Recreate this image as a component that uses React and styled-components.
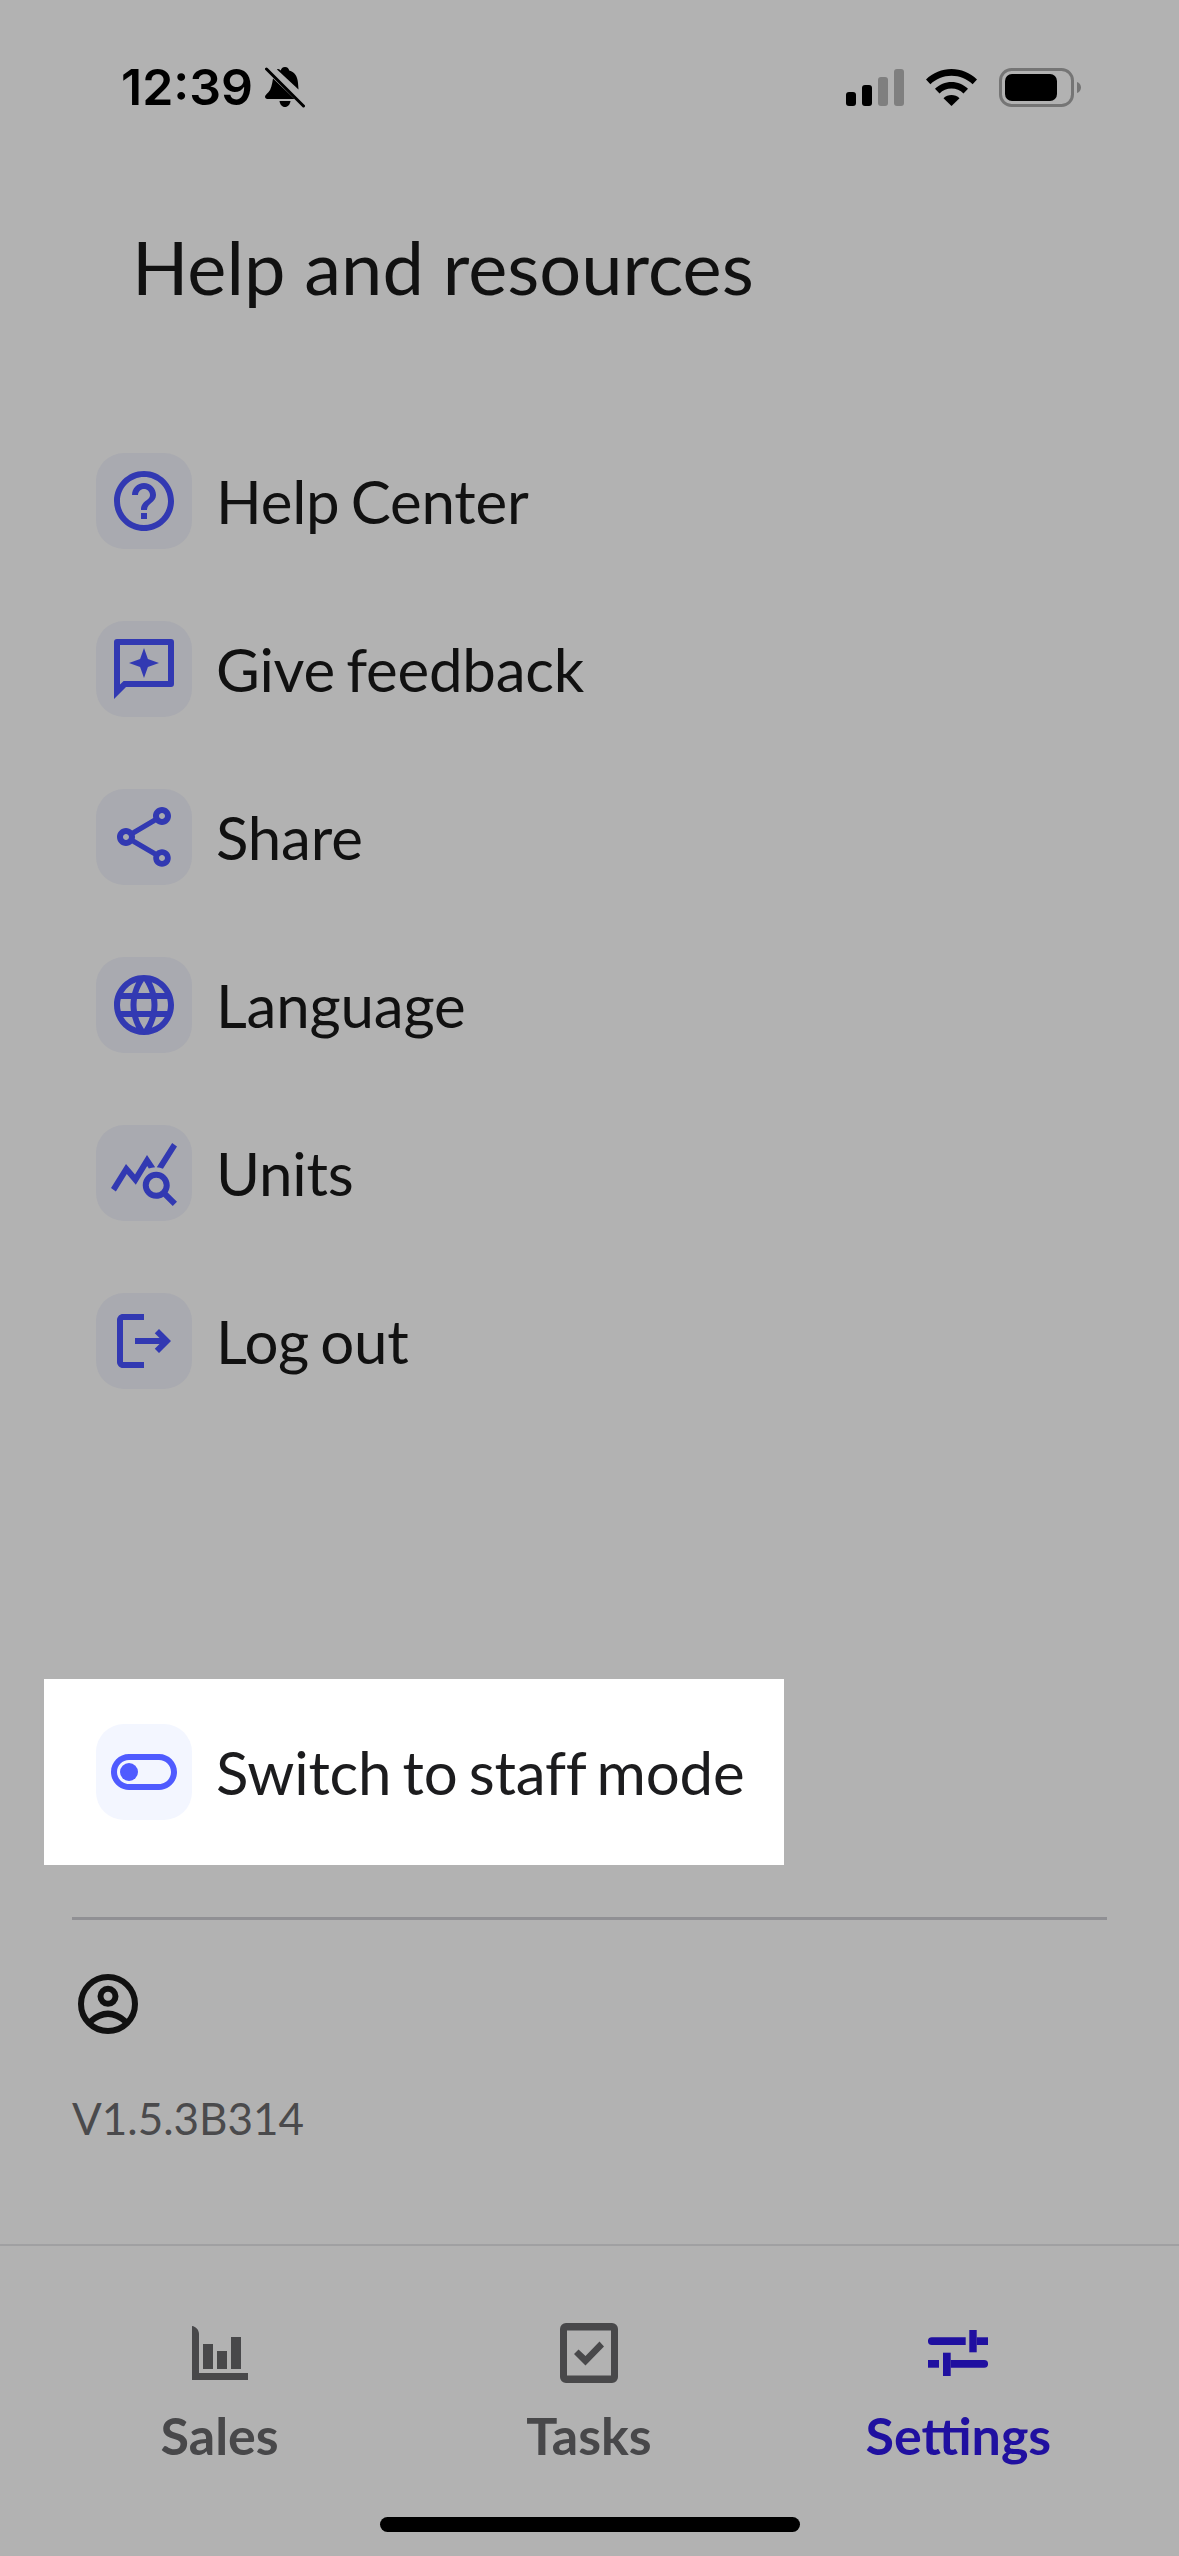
import React from "react";
import styled, { createGlobalStyle } from "styled-components";
import { MdHelpOutline, MdOutlineShare, MdLanguage, MdQueryStats } from "react-icons/md";

const GlobalStyle = createGlobalStyle`
  html, body { margin: 0; padding: 0; background: #b2b2b2; }
`;

const Page = styled.div`
  position: relative;
  width: 1179px;
  height: 2556px;
  display: flex;
  flex-direction: column;
  background: #b2b2b2;
  font-family: Lato, "Liberation Sans", sans-serif;
  overflow: hidden;
`;
const StatusBar = styled.div`
  height: 68px;
  padding: 68px 98px 0 121px;
  display: flex;
  align-items: flex-start;
  justify-content: space-between;
`;
const StatusLeft = styled.div`
  display: flex;
  align-items: center;
  gap: 12px;
  height: 38px;
`;
const Time = styled.span`
  font-family: Inter, sans-serif;
  font-size: 50px;
  font-weight: 600;
  line-height: 38px;
  color: #000;
`;
const StatusRight = styled.div`
  display: flex;
  align-items: center;
  gap: 22px;
`;
const Title = styled.h1`
  margin: 88px 0 0 132px;
  font-size: 74px;
  font-weight: 400;
  line-height: 86px;
  color: #111;
`;
const Menu = styled.div`
  margin-top: 143px;
  padding-left: 96px;
  display: flex;
  flex-direction: column;
  gap: 72px;
`;
const Row = styled.div`
  display: flex;
  align-items: center;
  gap: 24px;
  height: 96px;
`;
const Tile = styled.div`
  width: 96px;
  height: 96px;
  border-radius: 28px;
  display: flex;
  align-items: center;
  justify-content: center;
  background: ${(p) => (p.$light ? "#f3f6ff" : "#a9aab0")};
  color: ${(p) => (p.$light ? "#4f5bff" : "#3239b2")};
`;
const RowLabel = styled.span`
  font-size: 60px;
  line-height: 72px;
  letter-spacing: -0.2px;
  word-spacing: -4px;
  color: ${(p) => (p.$light ? "#1c1c1e" : "#111")};
  white-space: nowrap;
`;
const SwitchCard = styled.div`
  margin: 290px 0 0 44px;
  width: 740px;
  height: 186px;
  padding: 0 0 0 52px;
  box-sizing: border-box;
  background: #fff;
  display: flex;
  align-items: center;
`;
const Divider = styled.div`
  margin: 52px 72px 0;
  height: 3px;
  background: #909094;
`;
const AccountWrap = styled.div`
  margin: 48px 0 0 72px;
  height: 72px;
  color: #111;
`;
const Version = styled.div`
  margin: 50px 0 0 72px;
  font-size: 44px;
  line-height: 56px;
  color: #4a4a4c;
`;
const TabBar = styled.div`
  margin-top: auto;
  height: 312px;
  box-sizing: border-box;
  border-top: 2px solid #a0a0a2;
  padding: 0 36px 0 35px;
  display: grid;
  grid-template-columns: repeat(3, 1fr);
`;
const Tab = styled.div`
  display: flex;
  flex-direction: column;
  align-items: center;
  color: ${(p) => (p.$active ? "#2010a0" : "#48484a")};
`;
const TabIcon = styled.div`
  height: 60px;
  margin-top: 77px;
  display: flex;
  align-items: center;
  justify-content: center;
`;
const TabLabel = styled.span`
  margin-top: 22px;
  font-size: 52px;
  font-weight: 700;
  line-height: 60px;
`;
const HomeIndicator = styled.div`
  position: absolute;
  left: 380px;
  bottom: 24px;
  width: 420px;
  height: 15px;
  border-radius: 8px;
  background: #000;
`;

const BellOff = () => (
  <svg width="40" height="42" viewBox="0 0 40 42">
    <path d="M20 1c2.400 0 4 1.600 4.200 3.600C30 6.200 32.600 11 33 17l.5 6.500L12 3.500C13.600 2 15.600 4.600 15.800 4.600 16 2.600 17.600 1 20 1zM8 12.500L29.500 33H2.500c-1.600 0-2.500-1-2.500-2.200 0-1.600 1.600-2.800 3.400-4.600C6 23.600 7 19 8 12.500zM14.500 35h11c-.4 3.400-2.600 6-5.500 6s-5.100-2.600-5.500-6z" fill="#000" />
    <path d="M1.500 3L38.500 40" stroke="#000" strokeWidth="3" strokeLinecap="round" />
  </svg>
);

const Signal = () => (
  <svg width="58" height="37" viewBox="0 0 58 37">
    <rect x="0" y="23" width="10" height="14" rx="3" fill="#000" />
    <rect x="16" y="16" width="10" height="21" rx="3" fill="#000" />
    <rect x="32" y="8" width="10" height="29" rx="3" fill="#7f7f7f" />
    <rect x="48" y="0" width="10" height="37" rx="3" fill="#7f7f7f" />
  </svg>
);

const Wifi = () => (
  <svg width="51" height="37" viewBox="0 0 51 37">
    <path d="M25.500 0C35 0 44 3.800 51 10.500l-4.400 4.700C41 9.800 33.500 6.700 25.500 6.700S10 9.800 4.400 15.200L0 10.500C7 3.800 16 0 25.500 0z" fill="#000" />
    <path d="M25.500 13c6.200 0 12 2.400 16.500 6.800l-4.500 4.700c-3.200-3.100-7.500-4.900-12-4.900s-8.800 1.800-12 4.900L9 19.800C13.500 15.400 19.300 13 25.500 13z" fill="#000" />
    <path d="M25.500 26c3 0 5.800 1.100 8 3.200L25.500 37l-8-7.800c2.200-2.100 5-3.200 8-3.200z" fill="#000" />
  </svg>
);

const Battery = () => (
  <svg width="82" height="39" viewBox="0 0 82 39">
    <rect x="1.500" y="1.500" width="72" height="36" rx="11" fill="none" stroke="#757575" strokeWidth="3" />
    <rect x="6" y="6" width="52" height="27" rx="7" fill="#000" />
    <path d="M78 14c2.400.8 4 3 4 5.500S80.400 24.200 78 25z" fill="#757575" />
  </svg>
);

const FeedbackIcon = () => (
  <svg width="72" height="72" viewBox="0 0 24 24" fill="currentColor">
    <path fillRule="evenodd" d="M3 2h18a1 1 0 0 1 1 1v14a1 1 0 0 1-1 1H6l-4 4V3a1 1 0 0 1 1-1zm1 2v13.200L5.200 16H20V4z" />
    <path d="M12 5l1.300 3.700L17 10l-3.700 1.300L12 15l-1.300-3.700L7 10l3.700-1.300z" />
  </svg>
);

const LogoutIcon = () => (
  <svg width="72" height="72" viewBox="0 0 24 24" fill="currentColor">
    <path d="M17 8l-1.410 1.410L17.170 11H9v2h8.170l-1.580 1.580L17 16l4-4-4-4zM5 5h7V3H5c-1.100 0-2 .9-2 2v14c0 1.100.9 2 2 2h7v-2H5V5z" />
  </svg>
);

const ToggleIcon = () => (
  <svg width="72" height="72" viewBox="0 0 24 24" fill="currentColor">
    <path fillRule="evenodd" d="M17 6H7c-3.310 0-6 2.690-6 6s2.690 6 6 6h10c3.310 0 6-2.690 6-6s-2.690-6-6-6zm0 10H7c-2.210 0-4-1.790-4-4s1.790-4 4-4h10c2.210 0 4 1.790 4 4s-1.790 4-4 4z" />
    <circle cx="7" cy="12" r="3" />
  </svg>
);

const AccountIcon = () => (
  <svg width="72" height="72" viewBox="0 0 72 72" fill="none" stroke="currentColor" strokeWidth="6">
    <circle cx="36" cy="36" r="27" />
    <circle cx="36" cy="28.300" r="7.500" />
    <path d="M18.500 53.500Q36 38 53.500 53.500" />
  </svg>
);

const SalesIcon = () => (
  <svg width="56" height="54" viewBox="0 0 56 54" fill="currentColor">
    <path d="M0 0c4 .5 7 4 7 8v39h49v7H0z" />
    <rect x="11" y="18" width="10" height="25" />
    <rect x="25" y="25" width="10" height="18" />
    <rect x="39" y="11" width="10" height="32" />
  </svg>
);

const TasksIcon = () => (
  <svg width="58" height="60" viewBox="0 0 58 60" fill="currentColor">
    <path fillRule="evenodd" d="M6 0h46a6 6 0 0 1 6 6v48a6 6 0 0 1-6 6H6a6 6 0 0 1-6-6V6a6 6 0 0 1 6-6zm1 7.500v45h44v-45z" />
    <path d="M14 31l4.500-4.500 7 6.500 14-14.500 4.500 5-18.500 19z" />
  </svg>
);

const SettingsIcon = () => (
  <svg width="60" height="46" viewBox="0 0 60 46" fill="currentColor">
    <path d="M3.800 7.300h33.900v7.700H3.800a3.850 3.850 0 0 1 0-7.700z" />
    <rect x="41.300" y="0" width="7.400" height="22.300" />
    <rect x="48.700" y="7.300" width="11.300" height="7.700" />
    <rect x="0" y="30" width="11" height="7.700" />
    <rect x="15" y="22.700" width="7.700" height="23.300" />
    <path d="M22.700 30h33.500a3.850 3.850 0 0 1 0 7.700H22.700z" />
  </svg>
);

const menuItems = [
  { label: "Help Center", icon: <MdHelpOutline size={72} /> },
  { label: "Give feedback", icon: <FeedbackIcon /> },
  { label: "Share", icon: <MdOutlineShare size={72} /> },
  { label: "Language", icon: <MdLanguage size={72} /> },
  { label: "Units", icon: <MdQueryStats size={72} /> },
  { label: "Log out", icon: <LogoutIcon /> },
];

const tabs = [
  { label: "Sales", icon: <SalesIcon /> },
  { label: "Tasks", icon: <TasksIcon /> },
  { label: "Settings", icon: <SettingsIcon />, active: true },
];

export default function App() {
  return (
    <Page>
      <GlobalStyle />
      <StatusBar>
        <StatusLeft>
          <Time>12:39</Time>
          <BellOff />
        </StatusLeft>
        <StatusRight>
          <Signal />
          <Wifi />
          <Battery />
        </StatusRight>
      </StatusBar>
      <Title>Help and resources</Title>
      <Menu>
        {menuItems.map((item) => (
          <Row key={item.label}>
            <Tile>{item.icon}</Tile>
            <RowLabel>{item.label}</RowLabel>
          </Row>
        ))}
      </Menu>
      <SwitchCard>
        <Row>
          <Tile $light>
            <ToggleIcon />
          </Tile>
          <RowLabel $light>Switch to staff mode</RowLabel>
        </Row>
      </SwitchCard>
      <Divider />
      <AccountWrap>
        <AccountIcon />
      </AccountWrap>
      <Version>V1.5.3B314</Version>
      <TabBar>
        {tabs.map((tab) => (
          <Tab key={tab.label} $active={tab.active}>
            <TabIcon>{tab.icon}</TabIcon>
            <TabLabel>{tab.label}</TabLabel>
          </Tab>
        ))}
      </TabBar>
      <HomeIndicator />
    </Page>
  );
}
